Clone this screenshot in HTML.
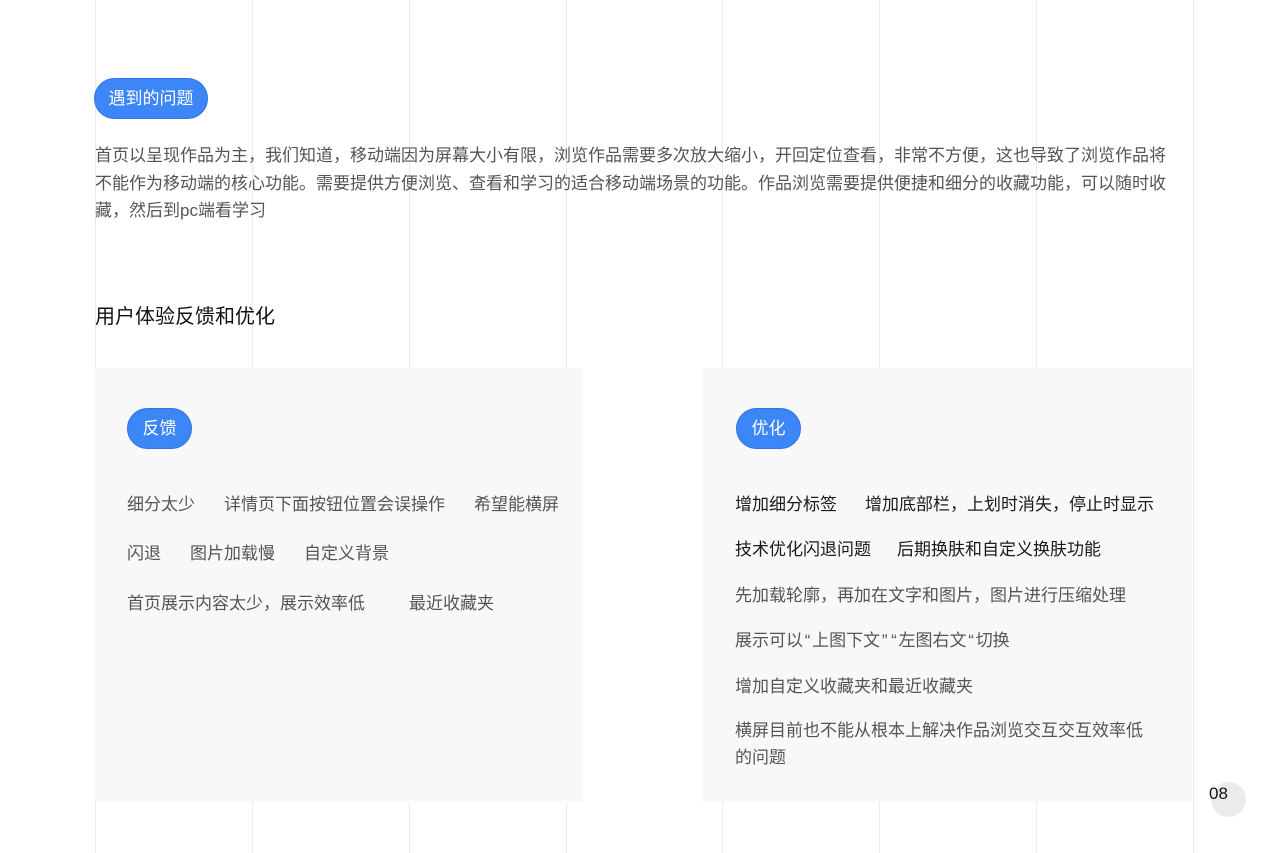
<!DOCTYPE html>
<html><head><meta charset="utf-8"><style>
*{margin:0;padding:0;box-sizing:border-box}
body{width:1280px;height:853px;background:#fff;position:relative;overflow:hidden;font-family:"Liberation Sans","Noto Sans CJK SC",sans-serif}
.v{position:absolute;top:0;width:1px;height:853px;background:#ebebeb}
.pill{position:absolute;background:#3d86f8;color:#fff;border-radius:21px;height:41px;line-height:40px;text-align:center;font-size:17px;border:1px solid #2f74e0}
.t{position:absolute;font-size:17px;color:#555;white-space:nowrap}
.d{color:#1a1a1a}
.q{padding:0 1.75px}
.panel{position:absolute;top:368px;height:434px;background:#f8f8f8}
</style></head><body>
<div class="v" style="left:95px"></div><div class="v" style="left:252px"></div><div class="v" style="left:409px"></div><div class="v" style="left:566px"></div><div class="v" style="left:722px"></div><div class="v" style="left:879px"></div><div class="v" style="left:1036px"></div><div class="v" style="left:1193px"></div>
<div class="pill" style="left:94px;top:78px;width:114px">遇到的问题</div>
<div class="t" style="left:95px;top:142px;line-height:27.5px">首页以呈现作品为主，我们知道，移动端因为屏幕大小有限，浏览作品需要多次放大缩小，开回定位查看，非常不方便，这也导致了浏览作品将<br>不能作为移动端的核心功能。需要提供方便浏览、查看和学习的适合移动端场景的功能。作品浏览需要提供便捷和细分的收藏功能，可以随时收<br>藏，然后到pc端看学习</div>
<div class="t" style="left:95px;top:300px;font-size:20px;color:#111">用户体验反馈和优化</div>
<div class="panel" style="left:95px;width:488px"></div>
<div class="panel" style="left:703px;width:489px"></div>
<div class="pill" style="left:127px;top:408px;width:65px">反馈</div>
<div class="pill" style="left:736px;top:408px;width:65px">优化</div>
<div class="t" style="left:127px;top:490px">细分太少<span style="margin-left:29px">详情页下面按钮位置会误操作</span><span style="margin-left:29px">希望能横屏</span></div>
<div class="t" style="left:127px;top:539px">闪退<span style="margin-left:29px">图片加载慢</span><span style="margin-left:29px">自定义背景</span></div>
<div class="t" style="left:127px;top:589px">首页展示内容太少，展示效率低<span style="margin-left:44px">最近收藏夹</span></div>
<div class="t d" style="left:735px;top:490px">增加细分标签<span style="margin-left:28px">增加底部栏，上划时消失，停止时显示</span></div>
<div class="t d" style="left:735px;top:535px">技术优化闪退问题<span style="margin-left:26px">后期换肤和自定义换肤功能</span></div>
<div class="t" style="left:735px;top:581px">先加载轮廓，再加在文字和图片，图片进行压缩处理</div>
<div class="t" style="left:735px;top:626px">展示可以<span class="q">“</span>上图下文<span class="q">”</span><span class="q">“</span>左图右文<span class="q">“</span>切换</div>
<div class="t" style="left:735px;top:672px">增加自定义收藏夹和最近收藏夹</div>
<div class="t" style="left:735px;top:717px;line-height:27px">横屏目前也不能从根本上解决作品浏览交互交互效率低<br>的问题</div>
<div style="position:absolute;left:1211px;top:782px;width:35px;height:35px;border-radius:50%;background:#ebebeb"></div>
<div class="t" style="left:1209px;top:784px;color:#111;font-size:17px">08</div>
</body></html>
